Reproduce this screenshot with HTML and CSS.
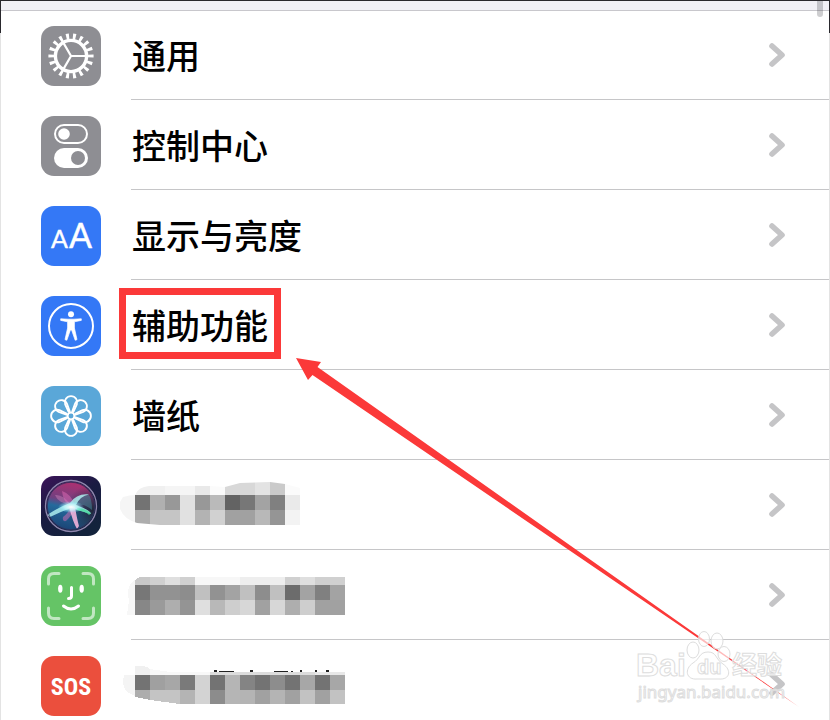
FILE: index.html
```html
<!DOCTYPE html>
<html lang="zh-CN">
<head>
<meta charset="utf-8">
<title>设置</title>
<link rel="stylesheet" href="styles.css">
</head>
<body>
<svg class="defs" aria-hidden="true">
  <defs>
    <symbol id="chevron" viewBox="0 0 18 26"><path d="M4 4L14 13L4 22" fill="none" stroke="#c5c5c7" stroke-width="5.6" stroke-linecap="round" stroke-linejoin="round"/></symbol>
  </defs>
</svg>
<main class="screen">
  <header class="topbar"></header>
  <span class="scroll-thumb"></span>
  <nav class="list">
    <a class="row" href="#general">
      <svg class="icon gray" viewBox="0 0 60 60"><g fill="none" stroke="#fff"><circle cx="30" cy="30" r="15.6" stroke-width="3.4"/><circle cx="30" cy="30" r="19.6" stroke-width="6" pathLength="180" stroke-dasharray="4.2 5.8" stroke-dashoffset="2.1"/><path d="M30 30H46M30 30L22 16.1M30 30L22 43.9" stroke-width="2.2"/></g></svg>
      <span class="label"><span class="name">通用</span><svg class="chevron"><use href="#chevron"/></svg></span>
    </a>
    <a class="row" href="#control">
      <svg class="icon gray" viewBox="0 0 60 60"><rect x="14" y="9" width="32" height="18" rx="9" fill="none" stroke="#fff" stroke-width="2"/><circle cx="23" cy="18" r="5.8" fill="#fff"/><rect x="13" y="32" width="34" height="20" rx="10" fill="#fff"/><circle cx="37" cy="42" r="7" fill="#8e8e93"/></svg>
      <span class="label"><span class="name">控制中心</span><svg class="chevron"><use href="#chevron"/></svg></span>
    </a>
    <a class="row" href="#display">
      <svg class="icon blue" viewBox="0 0 60 60"><text class="aa" x="10" y="42" font-size="25">A</text><text class="aa" x="28" y="42" font-size="34">A</text></svg>
      <span class="label"><span class="name">显示与亮度</span><svg class="chevron"><use href="#chevron"/></svg></span>
    </a>
    <a class="row" href="#accessibility">
      <svg class="icon blue" viewBox="0 0 60 60"><circle cx="30" cy="30" r="22" fill="none" stroke="#fff" stroke-width="2"/><circle cx="30" cy="18.3" r="3" fill="#fff"/><path d="M19.7 22.8L27 23.2H33L40.3 22.8V24.4L33.4 25.8V32L36 43.6L34.2 44.3L30.6 34H29.4L25.8 44.3L24 43.6L26.6 32V25.8L19.7 24.4Z" fill="#fff" stroke="#fff" stroke-width=".7" stroke-linejoin="round"/></svg>
      <span class="label"><span class="name marked">辅助功能</span><svg class="chevron"><use href="#chevron"/></svg></span>
    </a>
    <a class="row" href="#wallpaper">
      <svg class="icon sky" viewBox="0 0 60 60"><defs><path id="petal" d="M28 26.5L24.2 18.500A6.200 6.200 0 1 1 35.800 18.500L32 26.500"/></defs><g fill="none" stroke="#fff" stroke-width="1.9"><circle cx="30" cy="30" r="3.4"/><use href="#petal"/><use href="#petal" transform="rotate(45 30 30)"/><use href="#petal" transform="rotate(90 30 30)"/><use href="#petal" transform="rotate(135 30 30)"/><use href="#petal" transform="rotate(180 30 30)"/><use href="#petal" transform="rotate(225 30 30)"/><use href="#petal" transform="rotate(270 30 30)"/><use href="#petal" transform="rotate(315 30 30)"/></g></svg>
      <span class="label"><span class="name">墙纸</span><svg class="chevron"><use href="#chevron"/></svg></span>
    </a>
    <a class="row" href="#voice" aria-label="语音">
      <svg class="icon" viewBox="0 0 60 60">
        <defs>
          <linearGradient id="night" x2=".6" y2="1"><stop stop-color="#3c1459"/><stop offset=".5" stop-color="#1a1b42"/><stop offset="1" stop-color="#13233c"/></linearGradient>
          <linearGradient id="orb" x1=".6" y1="0" x2=".4" y2="1"><stop stop-color="#b02f70"/><stop offset=".4" stop-color="#704080"/><stop offset=".55" stop-color="#246a9c"/><stop offset="1" stop-color="#1b4475"/></linearGradient>
          <radialGradient id="shade" cx=".95" cy=".6" r=".55"><stop stop-color="#202638"/><stop offset="1" stop-color="#202638" stop-opacity="0"/></radialGradient>
          <radialGradient id="glow"><stop stop-color="#fff"/><stop offset=".5" stop-color="#c6fcff" stop-opacity=".7"/><stop offset="1" stop-color="#73e9ff" stop-opacity="0"/></radialGradient>
        </defs>
        <rect width="60" height="60" fill="url(#night)"/><circle cx="30" cy="30" r="24" fill="url(#orb)"/><circle cx="30" cy="30" r="24" fill="url(#shade)"/>
        <path d="M30 29Q22 18 14 19Q17 27 30 29" fill="#d98bc0" opacity=".4"/>
        <path d="M30 29Q22 27 21 15Q30 18 34 29Q32 39 25 45Q21 46 22 41Q28 37 30 29" fill="#ed70bc" opacity=".45"/>
        <path d="M32 28Q36 19 47 18Q51 22 51 34Q44 27 32 28" fill="#4b9aa8" opacity=".45"/>
        <path d="M29 27Q18 31 6 39L9 41Q19 36 30 32Q40 35 50 38Q49 34 35 29Q39 20 48 18.500Q36 17 29 27Z" fill="#b5f6f4" opacity=".8"/>
        <path d="M28 30Q31 44 36 53L38 50Q36 43 34 31Z" fill="#ffb8e2" opacity=".85"/>
        <path d="M36 33Q45 34 49 38" stroke="#49dfa0" stroke-width="2.5" fill="none" opacity=".8"/>
        <ellipse cx="30" cy="31" rx="13" ry="6" fill="url(#glow)"/><circle cx="30" cy="30" r="25.5" fill="none" stroke="#8f86ad" stroke-width="1.3"/><circle cx="30" cy="30" r="23.7" fill="none" stroke="#302d5b" stroke-width=".8"/>
      </svg>
      <span class="label">
        <svg class="mosaic" viewBox="0 0 240 60" shape-rendering="crispEdges">
          <clipPath id="smear1"><path d="M3 21Q10 19 15 19Q18 11 29 10H90L105 11L120 7L150 6L165 8L180 12V49H40L17 47Q4 43 0 33V26Z"/></clipPath>
          <g clip-path="url(#smear1)"><path fill="#f5f5f5" d="M0 19h15v30h-15z"/><path fill="#f0f0f0" d="M15 5h30v14h-30z"/><path fill="#f5f5f5" d="M45 5h30v14h-30z"/><path fill="#e9e9e9" d="M75 5h15v14h-15z"/><path fill="#fbfbfb" d="M90 5h15v14h-15zM165 5h15v14h-15z"/><path fill="#d8d8d8" d="M105 5h30v14h-30z"/><path fill="#e3e3e3" d="M135 5h15v14h-15z"/><path fill="#cacaca" d="M150 5h15v14h-15z"/>
          <path fill="#737373" d="M15 19h15v15h-15z"/><path fill="#b0b0b0" d="M30 19h15v15h-15z"/><path fill="#989898" d="M45 19h15v15h-15zM75 19h15v15h-15z"/><path fill="#e1e1e1" d="M60 19h15v30h-15z"/><path fill="#bababa" d="M90 19h15v15h-15z"/><path fill="#636363" d="M105 19h15v15h-15z"/><path fill="#777" d="M120 19h15v15h-15z"/><path fill="#a3a3a3" d="M135 19h15v15h-15z"/><path fill="#808080" d="M150 19h15v15h-15z"/><path fill="#eaeaea" d="M165 19h15v15h-15z"/>
          <path fill="#adadad" d="M15 34h15v15h-15z"/><path fill="#c5c5c5" d="M30 34h30v15h-30z"/><path fill="#b3b3b3" d="M75 34h15v15h-15z"/><path fill="#d1d1d1" d="M90 34h15v15h-15z"/><path fill="#a1a1a1" d="M105 34h30v15h-30z"/><path fill="#b8b8b8" d="M135 34h15v15h-15z"/><path fill="#959595" d="M150 34h15v15h-15z"/><path fill="#f3f3f3" d="M165 34h15v15h-15z"/></g>
        </svg>
        <svg class="chevron"><use href="#chevron"/></svg></span>
    </a>
    <a class="row" href="#face" aria-label="面容">
      <svg class="icon green" viewBox="0 0 60 60"><g fill="none" stroke="#fff" stroke-linecap="round"><path d="M7.5 18V13Q7.5 7.5 13 7.5H18M42 7.5H47Q52.500 7.5 52.500 13V18M52.500 42V47Q52.500 52.500 47 52.500H42M18 52.500H13Q7.500 52.500 7.500 47V42" stroke-width="3" opacity=".6"/><path d="M30.500 21.500V30Q30.500 32.500 27.500 32.500" stroke-width="3"/><path d="M22.500 40Q30 46 37.500 40" stroke-width="3"/></g><g fill="#fff"><ellipse cx="19.300" cy="22.800" rx="2.200" ry="4"/><ellipse cx="40.700" cy="22.800" rx="2.200" ry="4"/></g></svg>
      <span class="label">
        <svg class="mosaic" viewBox="0 0 240 60" shape-rendering="crispEdges">
          <path fill="#f7f7f7" d="M15 14Q8 17 8 29L9 35L7 49H15z"/><path fill="#c8c8c8" d="M15 14L20 11H30V19H15z"/><path fill="#d0d0d0" d="M30 11h15v8h-15zM60 11h15v8h-15zM165 11h15v8h-15zM195 11h30v8h-30z"/><path fill="#dfdfdf" d="M45 11h15v8h-15zM180 11h15v8h-15z"/><path fill="#f7f7f7" d="M75 11h45v8h-45z"/><path fill="#eee" d="M120 11h45v8h-45z"/>
          <path fill="#777" d="M15 19h15v15h-15z"/><path fill="#929292" d="M30 19h30v15h-30zM90 19h15v15h-15z"/><path fill="#8d8d8d" d="M60 19h15v15h-15zM135 19h15v15h-15z"/><path fill="#c0c0c0" d="M75 19h15v15h-15zM120 19h15v15h-15zM150 19h15v15h-15z"/><path fill="#a3a3a3" d="M105 19h15v15h-15zM180 19h15v15h-15zM210 19h15v15h-15z"/><path fill="#6c6c6c" d="M165 19h15v15h-15z"/><path fill="#808080" d="M195 19h15v15h-15z"/>
          <path fill="#878787" d="M15 34h15v15h-15z"/><path fill="#9a9a9a" d="M30 34h15v15h-15z"/><path fill="#aeaeae" d="M45 34h15v15h-15zM165 34h15v15h-15z"/><path fill="#949494" d="M60 34h15v15h-15z"/><path fill="#dfdfdf" d="M75 34h15v15h-15z"/><path fill="#b8b8b8" d="M90 34h15v15h-15z"/><path fill="#cecece" d="M105 34h15v15h-15zM180 34h15v15h-15z"/><path fill="#d7d7d7" d="M120 34h15v15h-15zM150 34h15v15h-15z"/><path fill="#a1a1a1" d="M135 34h15v15h-15zM195 34h30v15h-30z"/>
        </svg>
        <svg class="chevron"><use href="#chevron"/></svg></span>
    </a>
    <a class="row" href="#sos">
      <svg class="icon red" viewBox="0 0 60 60"><text class="sos" x="30" y="39" text-anchor="middle">SOS</text></svg>
      <span class="label">
        <svg class="mosaic" viewBox="0 0 240 60" shape-rendering="crispEdges">
          <path fill="#f4f4f4" d="M4 19H15V40Q3 36 3 26z"/><path fill="#f0f0f0" d="M15 10Q26 9 30 13V19H15z"/><path fill="#f8f8f8" d="M30 13L50 16H90V19H30z"/><path fill="#dcdcdc" d="M90 16h105v3h-105z"/><path fill="#e8e8e8" d="M195 16h30v3h-30z"/><path fill="#222" d="M94 14h3v2h-3zM99 15h15v1h-15zM130 14h3v2h-3zM154 15h14v1h-14zM171 15h2v1h-2zM180 14h2v2h-2zM195 14h2v2h-2zM206 14h3v2h-3z"/>
          <path fill="#737373" d="M15 19h15v15h-15zM90 19h15v15h-15zM135 19h15v15h-15zM165 19h15v15h-15zM195 19h15v15h-15z"/><path fill="#a0a0a0" d="M30 19h15v15h-15z"/><path fill="#a7a7a7" d="M45 19h15v15h-15zM180 19h15v15h-15zM210 19h15v15h-15z"/><path fill="#7a7a7a" d="M60 19h15v15h-15z"/><path fill="#d3d3d3" d="M75 19h15v29h-15z"/><path fill="#b5b5b5" d="M105 19h15v29h-15z"/><path fill="#848484" d="M120 19h15v15h-15z"/><path fill="#8d8d8d" d="M150 19h15v15h-15z"/>
          <path fill="#adadad" d="M15 34h15v10L15 41z"/><path fill="#c4c4c4" d="M30 34h30v14L30 44z"/><path fill="#b4b4b4" d="M60 34h15v14h-15zM120 34h15v14h-15zM150 34h15v14h-15z"/><path fill="#8c8c8c" d="M90 34h15v14h-15z"/><path fill="#a1a1a1" d="M135 34h15v14h-15zM165 34h15v14h-15zM195 34h15v14h-15z"/><path fill="#c2c2c2" d="M180 34h15v14h-15zM210 34h15v14h-15z"/>
        </svg>
        <svg class="chevron"><use href="#chevron"/></svg></span>
    </a>
  </nav>
  <svg class="overlay" viewBox="0 0 830 720" aria-hidden="true">
    <path d="M296 358L321 362L317.500 367L799 707L312.500 375L308 380Z" fill="#fb3939"/>
    <g class="watermark">
      <g class="paw"><ellipse cx="693" cy="650" rx="6" ry="8"/><ellipse cx="704" cy="639" rx="5.500" ry="7.500"/><ellipse cx="717" cy="641" rx="6" ry="8"/><ellipse cx="724" cy="654" rx="6" ry="7.500"/><path d="M708 652C699 652 700 659 693 663C684 669 686 680 697 679H719C730 680 732 670 723 664C715 659 717 652 708 652Z"/></g>
      <text class="latin" x="636" y="676" font-size="32">Bai</text>
      <text class="latin" x="697" y="674" font-size="20">du</text>
      <text class="cjk" x="732" y="674" font-size="25">经验</text>
      <text class="url" x="638" y="698" font-size="17">jingyan.baidu.com</text>
    </g>
  </svg>
</main>
</body>
</html>
```
FILE: styles.css
```css
* { box-sizing: border-box; }
body { margin: 0; background: #fff; color: #000; font-family: "Noto Sans CJK SC", sans-serif; }
.defs { position: absolute; width: 0; height: 0; }
.screen { position: relative; overflow: hidden; padding: 0 1px; border-bottom: 1px solid #e3e3e3; }
.screen::before, .screen::after { content: ""; position: absolute; z-index: 1; top: 0; bottom: 0; width: 1px; background: linear-gradient(#29282d 33px, #e3e3e3 33px); }
.screen::before { left: 0; }
.screen::after { right: 0; }
.topbar { height: 10px; background: #f1f0f6; border-top: 1px solid #29282d; }
.scroll-thumb { position: absolute; top: 1px; right: 7px; width: 6px; height: 16px; background: rgba(60, 60, 67, .25); border-radius: 0 0 3px 3px; }
.list { box-shadow: inset 0 1px #c8c7cc; }
.row { display: flex; height: 90px; padding-left: 40px; color: inherit; text-decoration: none; }
.row:last-child { height: 89px; }
.icon { flex: none; width: 60px; height: 60px; margin-top: 16px; border-radius: 13px; overflow: hidden; }
.gray { background: #8e8e93; }
.blue { background: #3478f6; }
.sky { background: #5aa7d8; }
.green { background: #65c466; }
.red { background: #eb4f3d; }
.label { flex: 1; display: flex; align-items: center; margin-left: 30px; padding-right: 43px; border-bottom: 1px solid #c6c6c8; }
.row:last-child .label { border-bottom-color: transparent; }
.name { padding-left: 1px; font-size: 34px; font-weight: 500; line-height: 50px; }
.marked { margin: 0 0 2px -12px; padding: 5px 6px 2px; border: 7px solid #fb3939; }
.chevron { width: 18px; height: 26px; margin-left: auto; }
.mosaic { align-self: flex-start; width: 240px; height: 60px; margin: 16px 0 0 -11px; }
.aa { font-family: Lato, sans-serif; fill: #fff; stroke: #fff; stroke-width: .4; }
.sos { font-family: "Roboto Condensed", "Open Sans Condensed", Roboto, sans-serif; font-weight: 700; font-size: 24px; fill: #fff; }
.overlay { position: absolute; top: 0; left: 0; width: 830px; height: 720px; pointer-events: none; }
.watermark { fill: #fff; fill-opacity: .65; stroke: #ddd; stroke-width: 1; }
.latin { font-family: "Liberation Sans", sans-serif; font-weight: 700; }
.cjk { font-weight: 700; }
.url { font-family: "Noto Sans", sans-serif; font-weight: 400; }
```
